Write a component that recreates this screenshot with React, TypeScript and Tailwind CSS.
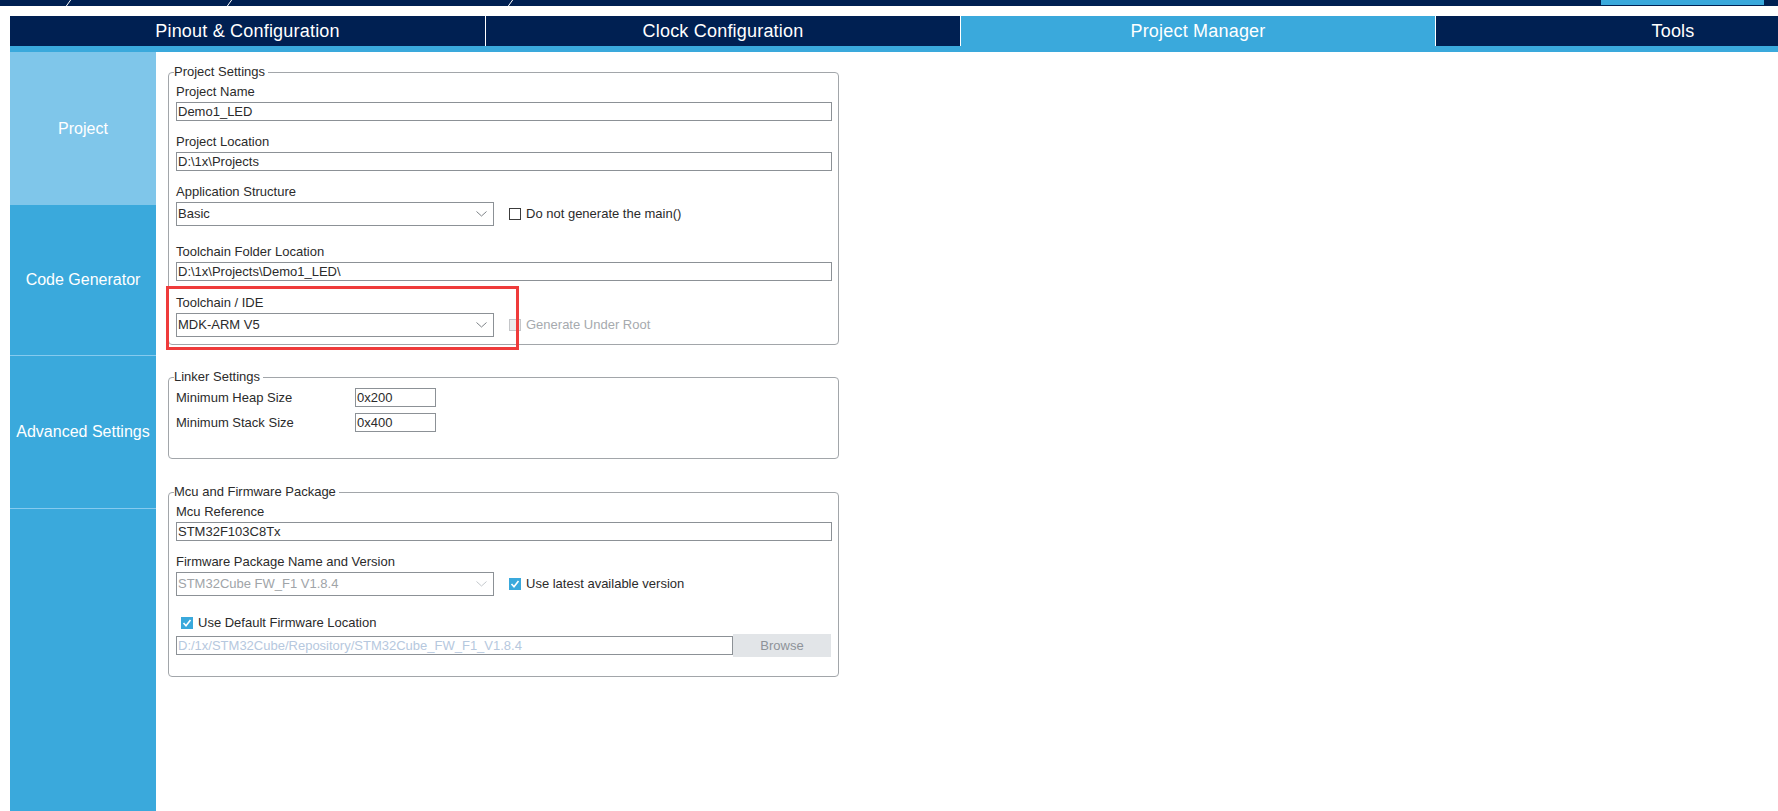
import type { ReactNode } from "react";

const navy = "bg-[#002052]";

const TopBand = () => (
  <div className={`flex h-[6px] ${navy}`}>
    <svg width="1601" height="6" className="shrink-0">
      <line x1="66" y1="6.5" x2="71" y2="-0.5" stroke="#ffffff" strokeWidth="1" />
      <line x1="227" y1="6.5" x2="232" y2="-0.5" stroke="#ffffff" strokeWidth="1" />
      <line x1="508" y1="6.5" x2="513" y2="-0.5" stroke="#ffffff" strokeWidth="1" />
    </svg>
    <div className="h-[5px] w-[163px] shrink-0 bg-[#3aa9dc]" />
  </div>
);

const tabs = [
  { name: "Pinout & Configuration", active: false },
  { name: "Clock Configuration", active: false },
  { name: "Project Manager", active: true },
  { name: "Tools", active: false },
];

const Tabs = () => (
  <div className="flex h-[30px] overflow-hidden">
    {tabs.map((t, i) => (
      <div
        key={t.name}
        className={`flex h-[30px] w-[475px] shrink-0 items-center justify-center text-[18px] tracking-[0.2px] text-white ${
          i > 0 ? "border-l border-white" : ""
        } ${t.active ? "bg-[#3aa9dc]" : navy}`}
      >
        {t.name}
      </div>
    ))}
  </div>
);

const Sidebar = () => (
  <div className="flex h-[759px] w-[146px] shrink-0 flex-col bg-[#3aa9dc] text-[16px] text-white">
    <div className="flex h-[153px] items-center justify-center bg-[#7fc6ea]">Project</div>
    <div className="flex h-[151px] items-center justify-center border-b border-[#86caee]">Code Generator</div>
    <div className="flex h-[153px] items-center justify-center border-b border-[#86caee]">Advanced Settings</div>
  </div>
);

const Label = ({ children, className = "" }: { children: ReactNode; className?: string }) => (
  <div className={`h-4 text-[13px] leading-4 text-[#2b2b2b] ${className}`}>{children}</div>
);

const TextBox = ({ value }: { value: string }) => (
  <div className="mt-[2px] h-[19px] border border-[#8c9196] px-px text-[13px] leading-[17px] text-[#2b2b2b]">
    {value}
  </div>
);

const Chevron = ({ color = "#8c9196" }: { color?: string }) => (
  <svg width="11" height="6" viewBox="0 0 11 6">
    <polyline points="0.5,0.5 5.5,5 10.5,0.5" fill="none" stroke={color} strokeWidth="1" />
  </svg>
);

const Select = ({ value, disabled }: { value: string; disabled?: boolean }) => (
  <div
    className={`flex h-6 w-[318px] shrink-0 items-center justify-between border border-[#8c9196] pl-px pr-[6px] text-[13px] ${
      disabled ? "text-[#a0a4a8]" : "text-[#2b2b2b]"
    }`}
  >
    <span>{value}</span>
    <Chevron color={disabled ? "#c4c8cc" : "#7d8287"} />
  </div>
);

const Check = ({ state }: { state: "off" | "on" | "disabled" }) => {
  if (state === "on")
    return (
      <div className="flex h-3 w-3 shrink-0 items-center justify-center bg-[#3aa9dc]">
        <svg width="12" height="12" viewBox="0 0 12 12">
          <polyline points="2.5,6 5,8.8 9.5,3" fill="none" stroke="#ffffff" strokeWidth="1.6" />
        </svg>
      </div>
    );
  if (state === "disabled")
    return <div className="h-3 w-3 shrink-0 border border-[#c4c6c9] bg-[#ececec]" />;
  return <div className="h-3 w-3 shrink-0 border border-[#3c3c3c] bg-white" />;
};

const Box = ({ title, children, className = "" }: { title: string; children: ReactNode; className?: string }) => (
  <fieldset className={`w-[671px] rounded-[4px] border border-[#a2a6aa] pl-[7px] pr-[6px] ${className}`}>
    <legend className="ml-[-2px] pr-[3px] text-[13px] leading-4 text-[#2b2b2b]">{title}</legend>
    {children}
  </fieldset>
);

export default function App() {
  return (
    <div className="relative h-[811px] w-full overflow-hidden bg-white font-['Liberation_Sans',Arial,sans-serif]">
      <TopBand />
      <div className="pl-[10px] pt-[10px]">
        <Tabs />
        <div className="h-[6px] bg-[#3aa9dc]" />
        <div className="flex">
          <Sidebar />
          <div className="pl-[12px] pt-[12px]">
            <Box title="Project Settings" className="pb-[7px]">
              <Label className="mt-[4px]">Project Name</Label>
              <TextBox value="Demo1_LED" />
              <Label className="mt-[13px]">Project Location</Label>
              <TextBox value="D:\1x\Projects" />
              <Label className="mt-[13px]">Application Structure</Label>
              <div className="mt-[2px] flex items-center">
                <Select value="Basic" />
                <div className="ml-[15px] flex items-center gap-[5px] text-[13px] text-[#2b2b2b]">
                  <Check state="off" />
                  <span>Do not generate the main()</span>
                </div>
              </div>
              <Label className="mt-[18px]">Toolchain Folder Location</Label>
              <TextBox value="D:\1x\Projects\Demo1_LED\" />
              <Label className="mt-[14px]">Toolchain / IDE</Label>
              <div className="mt-[2px] flex items-center">
                <Select value="MDK-ARM V5" />
                <div className="ml-[15px] flex items-center gap-[5px] text-[13px] text-[#a6aaae]">
                  <Check state="disabled" />
                  <span>Generate Under Root</span>
                </div>
              </div>
            </Box>

            <Box title="Linker Settings" className="mt-[24px] pb-[26px]">
              <div className="mt-[3px] flex h-[19px] items-center">
                <span className="w-[179px] text-[13px] text-[#2b2b2b]">Minimum Heap Size</span>
                <div className="h-[19px] w-[81px] border border-[#8c9196] px-px text-[13px] leading-[17px] text-[#2b2b2b]">0x200</div>
              </div>
              <div className="mt-[6px] flex h-[19px] items-center">
                <span className="w-[179px] text-[13px] text-[#2b2b2b]">Minimum Stack Size</span>
                <div className="h-[19px] w-[81px] border border-[#8c9196] px-px text-[13px] leading-[17px] text-[#2b2b2b]">0x400</div>
              </div>
            </Box>

            <Box title="Mcu and Firmware Package" className="mt-[25px] pb-[19px]">
              <Label className="mt-[4px]">Mcu Reference</Label>
              <TextBox value="STM32F103C8Tx" />
              <Label className="mt-[13px]">Firmware Package Name and Version</Label>
              <div className="mt-[2px] flex items-center">
                <Select value="STM32Cube FW_F1 V1.8.4" disabled />
                <div className="ml-[15px] flex items-center gap-[5px] text-[13px] text-[#2b2b2b]">
                  <Check state="on" />
                  <span>Use latest available version</span>
                </div>
              </div>
              <div className="mt-[19px] flex h-4 items-center gap-[5px] pl-[5px] text-[13px] text-[#2b2b2b]">
                <Check state="on" />
                <span>Use Default Firmware Location</span>
              </div>
              <div className="mt-[3px] flex items-center">
                <div className="h-[19px] w-[557px] border border-[#8c9196] px-px text-[13px] leading-[17px] text-[#b6c8de]">
                  D:/1x/STM32Cube/Repository/STM32Cube_FW_F1_V1.8.4
                </div>
                <div className="flex h-[23px] w-[98px] items-center justify-center bg-[#e2e5e8] text-[13px] text-[#8e9399]">
                  Browse
                </div>
              </div>
            </Box>
          </div>
        </div>
      </div>
      <div className="absolute left-[166px] top-[286px] h-[64px] w-[353px] border-[3px] border-[#ef3b3b]" />
    </div>
  );
}
